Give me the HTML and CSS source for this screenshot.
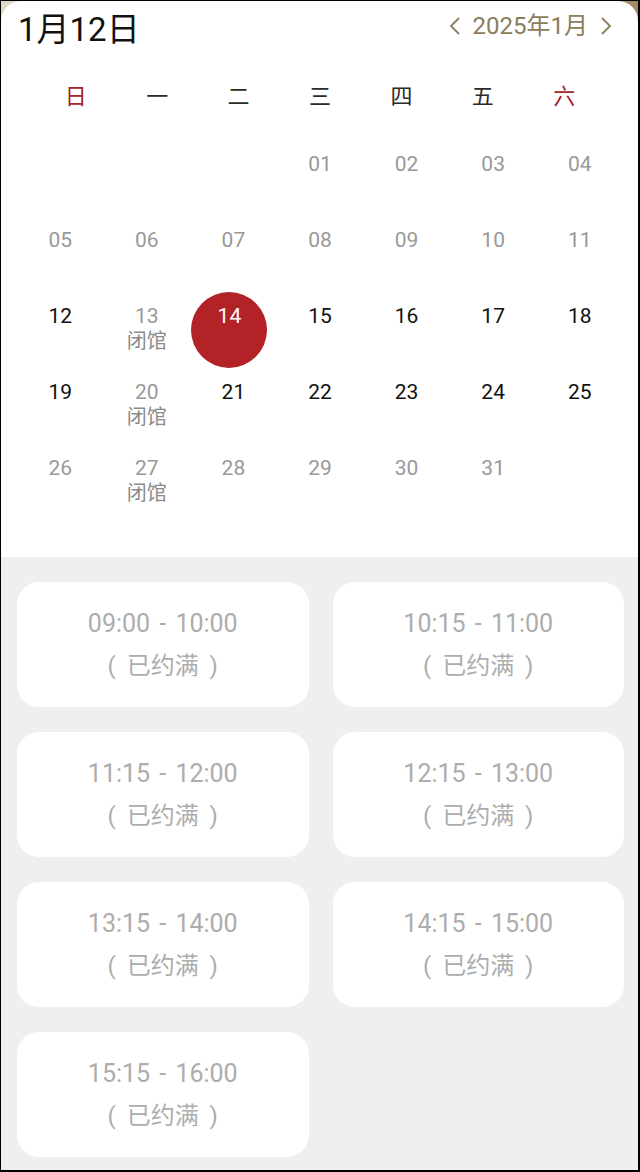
FILE: index.html
```html
<!DOCTYPE html>
<html lang="zh-CN">
<head>
    <meta charset="UTF-8">
    <title>预约日历</title>
    <link rel="stylesheet" href="styles.css">
</head>
<body>
    <div class="frame">
        <div class="calendar">
            <div class="cal-head">
                <h1 class="cur-date">1月12日</h1>
                <div class="month-nav">
                    <svg class="chev" width="12" height="20" viewBox="0 0 12 20"><path d="M10 2 L2 10 L10 18" fill="none" stroke="currentColor" stroke-width="1.8"/></svg>
                    <span>2025年1月</span>
                    <svg class="chev" width="12" height="20" viewBox="0 0 12 20"><path d="M2 2 L10 10 L2 18" fill="none" stroke="currentColor" stroke-width="1.8"/></svg>
                </div>
            </div>

            <div class="weekdays">
                <span class="weekend">日</span>
                <span>一</span>
                <span>二</span>
                <span>三</span>
                <span>四</span>
                <span>五</span>
                <span class="weekend">六</span>
            </div>

            <div class="days">
                <div class="day"></div>
                <div class="day"></div>
                <div class="day"></div>
                <div class="day past"><span class="num">01</span></div>
                <div class="day past"><span class="num">02</span></div>
                <div class="day past"><span class="num">03</span></div>
                <div class="day past"><span class="num">04</span></div>

                <div class="day past"><span class="num">05</span></div>
                <div class="day past"><span class="num">06</span></div>
                <div class="day past"><span class="num">07</span></div>
                <div class="day past"><span class="num">08</span></div>
                <div class="day past"><span class="num">09</span></div>
                <div class="day past"><span class="num">10</span></div>
                <div class="day past"><span class="num">11</span></div>

                <div class="day"><span class="num">12</span></div>
                <div class="day past"><span class="num">13</span><span class="note">闭馆</span></div>
                <div class="day selected"><span class="num">14</span></div>
                <div class="day"><span class="num">15</span></div>
                <div class="day"><span class="num">16</span></div>
                <div class="day"><span class="num">17</span></div>
                <div class="day"><span class="num">18</span></div>

                <div class="day"><span class="num">19</span></div>
                <div class="day past"><span class="num">20</span><span class="note">闭馆</span></div>
                <div class="day"><span class="num">21</span></div>
                <div class="day"><span class="num">22</span></div>
                <div class="day"><span class="num">23</span></div>
                <div class="day"><span class="num">24</span></div>
                <div class="day"><span class="num">25</span></div>

                <div class="day past"><span class="num">26</span></div>
                <div class="day past"><span class="num">27</span><span class="note">闭馆</span></div>
                <div class="day past"><span class="num">28</span></div>
                <div class="day past"><span class="num">29</span></div>
                <div class="day past"><span class="num">30</span></div>
                <div class="day past"><span class="num">31</span></div>
                <div class="day"></div>
            </div>
        </div>

        <div class="slots">
            <div class="slot"><p class="time">09:00 - 10:00</p><p class="status">( 已约满 )</p></div>
            <div class="slot"><p class="time">10:15 - 11:00</p><p class="status">( 已约满 )</p></div>
            <div class="slot"><p class="time">11:15 - 12:00</p><p class="status">( 已约满 )</p></div>
            <div class="slot"><p class="time">12:15 - 13:00</p><p class="status">( 已约满 )</p></div>
            <div class="slot"><p class="time">13:15 - 14:00</p><p class="status">( 已约满 )</p></div>
            <div class="slot"><p class="time">14:15 - 15:00</p><p class="status">( 已约满 )</p></div>
            <div class="slot"><p class="time">15:15 - 16:00</p><p class="status">( 已约满 )</p></div>
        </div>
    </div>
</body>
</html>
```

FILE: styles.css
```css
* {
    margin: 0;
    padding: 0;
    box-sizing: border-box;
}

body {
    font-family: Roboto, "Noto Sans CJK SC", sans-serif;
    background: #000;
}

.frame {
    width: 640px;
    height: 1172px;
    border: 1px solid #000;
    border-right-width: 2px;
    border-bottom-width: 2px;
    background: linear-gradient(90deg, #e2d8c4, #c9b896 50%, #a38b62);
    display: flex;
    flex-direction: column;
    overflow: hidden;
}

.calendar {
    background: #fff;
    border-radius: 20px 20px 0 0;
    padding-bottom: 37px;
}

.cal-head {
    height: 76px;
    display: flex;
    justify-content: space-between;
    align-items: flex-start;
    padding: 6px 26px 0 17px;
}

.cur-date {
    font-size: 33px;
    font-weight: 400;
    color: #111;
    line-height: 46px;
}

.month-nav {
    display: flex;
    align-items: center;
    gap: 12px;
    color: #8b7d5c;
    font-size: 24px;
    line-height: 36px;
    padding-top: 1px;
}

.chev {
    display: block;
}

.weekdays {
    display: grid;
    grid-template-columns: repeat(7, 1fr);
    padding: 0 33px 0 34px;
    height: 40px;
    line-height: 40px;
    text-align: center;
    font-size: 22px;
    color: #2a2a2a;
    margin-bottom: 23px;
}

.weekdays .weekend {
    color: #a3262b;
}

.days {
    display: grid;
    grid-template-columns: repeat(7, 1fr);
    padding: 0 15px 0 16px;
}

.day {
    height: 76px;
    padding-top: 12px;
    display: flex;
    flex-direction: column;
    align-items: center;
    color: #111;
}

.day .num {
    font-size: 21px;
    line-height: 24px;
}

.day .note {
    font-size: 20px;
    line-height: 26px;
}

.day.past {
    color: #999;
}

.day.past .note {
    color: #8a8a8a;
}

.day.selected {
    width: 76px;
    justify-self: center;
    margin-right: 8px;
    border-radius: 50%;
    background: #b22227;
    color: #fff;
}

.slots {
    flex: 1;
    background: #efeff1;
    display: grid;
    grid-template-columns: 1fr 1fr;
    grid-auto-rows: 125px;
    gap: 25px 24px;
    padding: 25px 14px 0 16px;
}

.slot {
    background: #fff;
    border-radius: 22px;
    display: flex;
    flex-direction: column;
    justify-content: center;
    align-items: center;
    color: #adadad;
}

.slot .time {
    font-size: 25px;
    line-height: 42px;
    word-spacing: 3px;
}

.slot .status {
    font-size: 24px;
    line-height: 42px;
    word-spacing: 5px;
}
```
